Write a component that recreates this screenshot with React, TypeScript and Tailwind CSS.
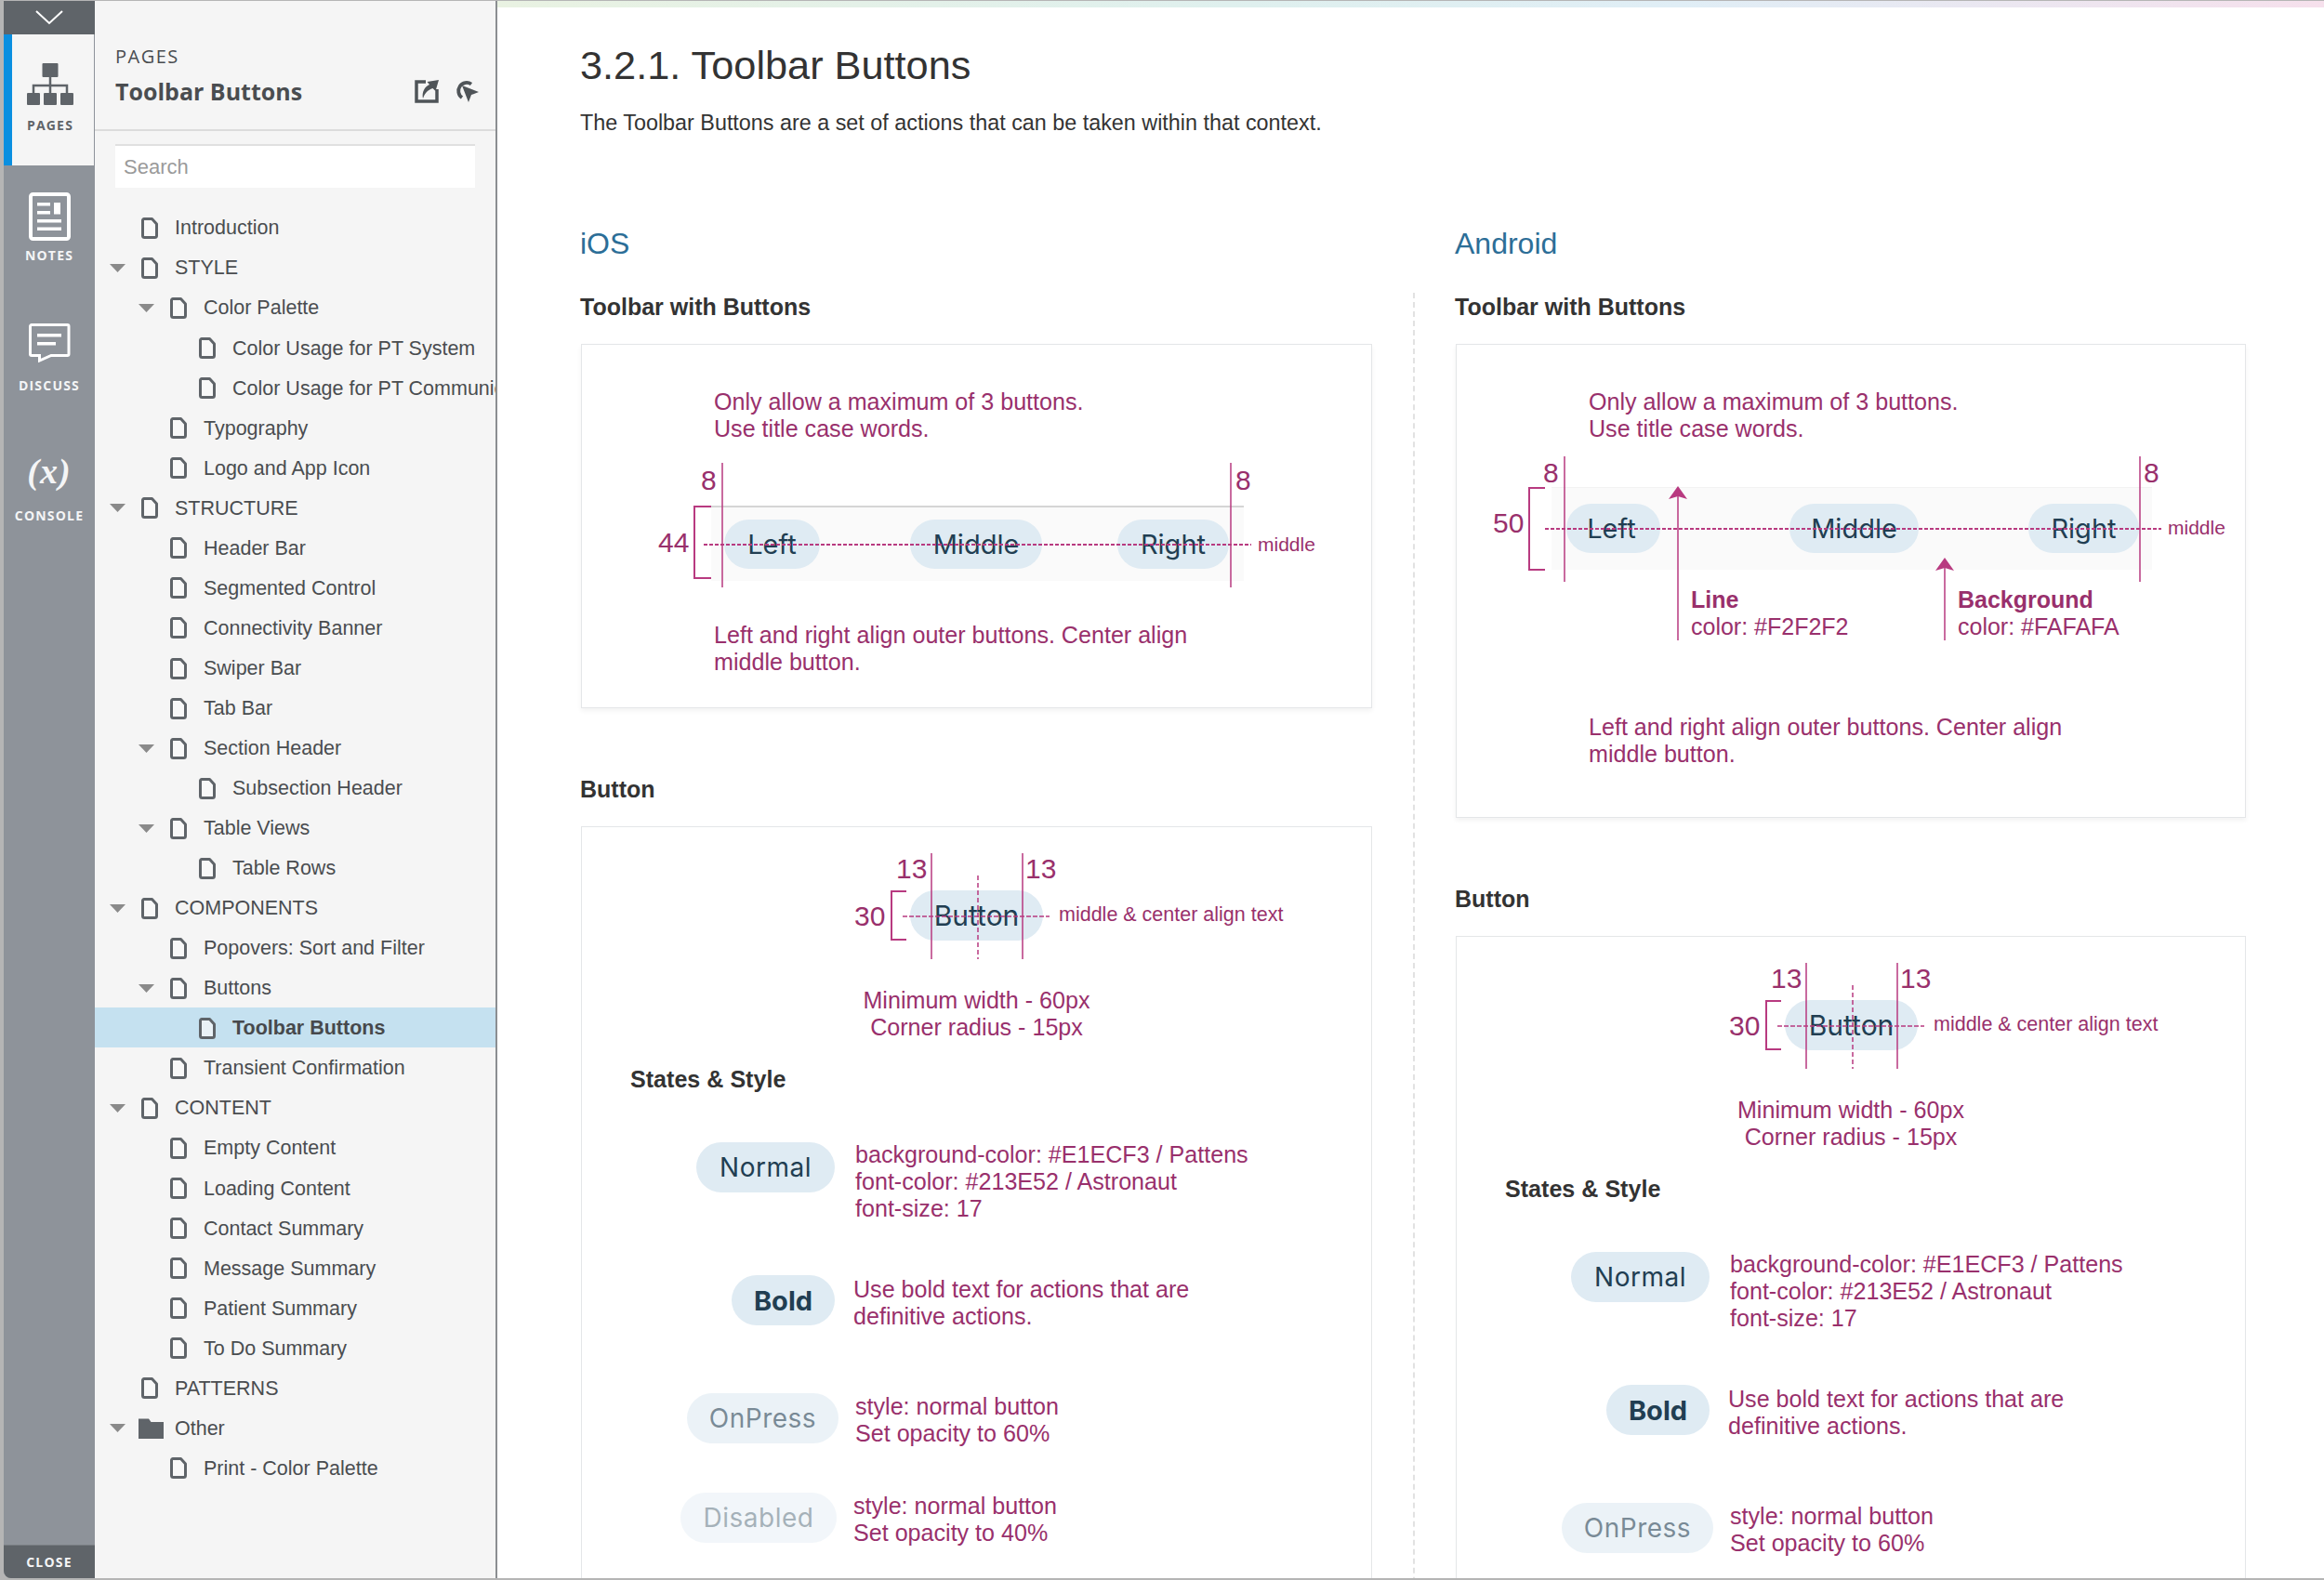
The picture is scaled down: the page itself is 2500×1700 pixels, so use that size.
import React from 'react';

const LINE = '#b83a80';

function DocIcon() {
  return (
    <svg width="18" height="23" viewBox="0 0 18 23" className="shrink-0">
      <path d="M3 1.5H11.5L16.5 7V19.5a2 2 0 0 1-2 2H3.5a2 2 0 0 1-2-2V3A1.5 1.5 0 0 1 3 1.5Z" fill="#fafafa" fillOpacity="0.7" stroke="#5f6469" strokeWidth="3" strokeLinejoin="round" />
    </svg>
  );
}

function FolderIcon() {
  return (
    <svg width="27" height="22" viewBox="0 0 27 22" className="shrink-0 -ml-[3px] -mr-[6px]">
      <path d="M0 0.5H11L13.5 4H27V22H0Z" fill="#5f6469" />
    </svg>
  );
}

function Caret() {
  return (
    <svg width="17" height="9" viewBox="0 0 17 9">
      <path d="M0 0H17L8.5 9Z" fill="#8a8a8a" />
    </svg>
  );
}

type Row = { t: string; d: number; c?: boolean; sel?: boolean; folder?: boolean };
const rows: Row[] = [
  { t: 'Introduction', d: 0 },
  { t: 'STYLE', d: 0, c: true },
  { t: 'Color Palette', d: 1, c: true },
  { t: 'Color Usage for PT System', d: 2 },
  { t: 'Color Usage for PT Communication', d: 2 },
  { t: 'Typography', d: 1 },
  { t: 'Logo and App Icon', d: 1 },
  { t: 'STRUCTURE', d: 0, c: true },
  { t: 'Header Bar', d: 1 },
  { t: 'Segmented Control', d: 1 },
  { t: 'Connectivity Banner', d: 1 },
  { t: 'Swiper Bar', d: 1 },
  { t: 'Tab Bar', d: 1 },
  { t: 'Section Header', d: 1, c: true },
  { t: 'Subsection Header', d: 2 },
  { t: 'Table Views', d: 1, c: true },
  { t: 'Table Rows', d: 2 },
  { t: 'COMPONENTS', d: 0, c: true },
  { t: 'Popovers: Sort and Filter', d: 1 },
  { t: 'Buttons', d: 1, c: true },
  { t: 'Toolbar Buttons', d: 2, sel: true },
  { t: 'Transient Confirmation', d: 1 },
  { t: 'CONTENT', d: 0, c: true },
  { t: 'Empty Content', d: 1 },
  { t: 'Loading Content', d: 1 },
  { t: 'Contact Summary', d: 1 },
  { t: 'Message Summary', d: 1 },
  { t: 'Patient Summary', d: 1 },
  { t: 'To Do Summary', d: 1 },
  { t: 'PATTERNS', d: 0 },
  { t: 'Other', d: 0, c: true, folder: true },
  { t: 'Print - Color Palette', d: 1 },
];
const indent = ['pl-[16px]', 'pl-[47px]', 'pl-[78px]'];

function TreeRow({ r }: { r: Row }) {
  return (
    <div className={`flex h-[43.05px] items-center whitespace-nowrap pt-[2px] ${indent[r.d]} ${r.sel ? 'bg-[#c5e1f0] font-bold text-[#47494c]' : ''}`}>
      <div className="flex w-[34px] shrink-0 items-center">{r.c ? <Caret /> : null}</div>
      {r.folder ? <FolderIcon /> : <DocIcon />}
      <span className="ml-[18px]">{r.t}</span>
    </div>
  );
}

function RailLabel({ children, dark }: { children: React.ReactNode; dark?: boolean }) {
  return (
    <div className={`font-['Open_Sans',sans-serif] text-[14px] font-bold leading-none tracking-[1.2px] ${dark ? 'text-[#5f6469]' : 'text-[#f4f5f6]'}`}>
      {children}
    </div>
  );
}

function Rail() {
  return (
    <div className="flex w-[98px] shrink-0 flex-col bg-[#8e939a]">
      <div className="flex h-[36px] items-center justify-center bg-[#5f6469]">
        <svg width="32" height="18" viewBox="0 0 32 18">
          <path d="M2 2L16 15L30 2" fill="none" stroke="#fff" strokeWidth="2" />
        </svg>
      </div>
      <div className="flex h-[141px] w-[97px] flex-col items-center border-l-[9px] border-[#0a8fe0] bg-[#f5f5f5] pt-[31px]">
        <svg width="50" height="45" viewBox="0 0 50 45" className="-ml-[6px]">
          <rect x="16.5" y="0" width="17" height="15" rx="1" fill="#5f6469" />
          <path d="M25 15V24M7 32V24H43V32M25 24V32" fill="none" stroke="#5f6469" strokeWidth="2.5" />
          <rect x="0" y="32" width="14" height="13" rx="1" fill="#5f6469" />
          <rect x="18" y="32" width="14" height="13" rx="1" fill="#5f6469" />
          <rect x="36" y="32" width="14" height="13" rx="1" fill="#5f6469" />
        </svg>
        <div className="mt-[15px] -ml-[6px]"><RailLabel dark>PAGES</RailLabel></div>
      </div>
      <div className="flex flex-col items-center pt-[29px]">
        <svg width="45" height="52" viewBox="0 0 45 52">
          <rect x="2" y="2" width="41" height="48" rx="2.5" fill="#8e939a" stroke="#fff" strokeWidth="4" />
          <rect x="9" y="11" width="14" height="3.5" fill="#fff" />
          <rect x="9" y="20" width="14" height="3.5" fill="#fff" />
          <rect x="27" y="11" width="7" height="12.5" fill="#fff" />
          <rect x="9" y="29" width="26" height="3.5" fill="#fff" />
          <rect x="9" y="37.5" width="26" height="3.5" fill="#fff" />
        </svg>
        <div className="mt-[9px]"><RailLabel>NOTES</RailLabel></div>
      </div>
      <div className="flex flex-col items-center pt-[66px]">
        <svg width="45" height="42" viewBox="0 0 45 42">
          <path d="M3 1.5H41.5a1.5 1.5 0 0 1 1.5 1.5V33a1.5 1.5 0 0 1-1.5 1.5H24L11.5 40V34.5H3A1.5 1.5 0 0 1 1.5 33V3A1.5 1.5 0 0 1 3 1.5Z" fill="#8e939a" stroke="#fff" strokeWidth="3" />
          <rect x="9" y="11" width="26" height="3.5" fill="#fff" />
          <rect x="9" y="20" width="20" height="3.5" fill="#fff" />
        </svg>
        <div className="mt-[18px]"><RailLabel>DISCUSS</RailLabel></div>
      </div>
      <div className="flex flex-col items-center pt-[59px]">
        <div className="font-['Liberation_Serif',serif] text-[38px] font-bold italic leading-[52px] tracking-[1px] text-[#f4f5f6]">(x)</div>
        <div className="mt-[15px]"><RailLabel>CONSOLE</RailLabel></div>
      </div>
      <div className="mt-auto flex h-[36px] items-center justify-center border-t border-[#777c81] bg-[#5f6469]">
        <RailLabel>CLOSE</RailLabel>
      </div>
    </div>
  );
}

function Panel() {
  return (
    <div className="flex w-[433px] shrink-0 flex-col overflow-hidden border-r-2 border-[#8b8e91] bg-[#f5f5f5] font-['Liberation_Sans',sans-serif] text-[21.5px] text-[#4a4d50]">
      <div className="flex h-[140px] shrink-0 flex-col border-b-2 border-[#dcdcdc] pl-[22px] pr-[18px] pt-[46px] font-['Open_Sans',sans-serif]">
        <div className="text-[20px] leading-[28px] tracking-[1.5px] text-[#4a4d50]">PAGES</div>
        <div className="mt-[5px] flex items-center justify-between">
          <div className="text-[25px] font-bold leading-[36px] text-[#4a4d50]">Toolbar Buttons</div>
          <div className="flex items-center gap-[17px]">
            <svg width="26" height="25" viewBox="0 0 26 25">
              <path d="M12 2H2V23H24V10" fill="none" stroke="#4f5458" strokeWidth="3.5" />
              <path d="M26 0L22.5 12L19.5 9C14 11 11 14 9 20C7.5 13 11 7 16 5L13.5 2Z" fill="#4f5458" />
            </svg>
            <svg width="26" height="24" viewBox="0 0 26 24">
              <path d="M18 4.5A8.5 8.5 0 1 0 8 19" fill="none" stroke="#4f5458" strokeWidth="3.8" />
              <path d="M8 6L26 13L18 16L15 24Z" fill="#4f5458" />
            </svg>
          </div>
        </div>
      </div>
      <div className="ml-[22px] mr-[22px] mt-[14px] flex h-[47px] shrink-0 items-center border-t-2 border-[#e0e0e0] bg-white pl-[9px] text-[22px] text-[#9a9a9a]">
        Search
      </div>
      <div className="mt-[21px]">
        {rows.map((r) => (
          <TreeRow key={r.t} r={r} />
        ))}
      </div>
    </div>
  );
}

function Pill({ children, className }: { children: React.ReactNode; className: string }) {
  return (
    <div className={`flex items-center justify-center rounded-full bg-[#dfebf3] font-['Inter',sans-serif] text-[#213E52] ${className}`}>
      {children}
    </div>
  );
}

const magenta = 'text-[#99306c]';

function Label({ className, children }: { className: string; children: React.ReactNode }) {
  return <div className={`absolute whitespace-nowrap leading-none ${magenta} ${className}`}>{children}</div>;
}

function IosDiagram() {
  return (
    <div className="relative mt-[14px] h-[150px]">
      <div className="absolute left-[139px] top-[54px] h-[81px] w-[573px] border-t-2 border-[#d5d5d5] bg-[#fafafa]" />
      <Pill className="absolute left-[153px] top-[69px] h-[53px] w-[103px] text-[29px]">Left</Pill>
      <Pill className="absolute left-[353px] top-[69px] h-[53px] w-[142px] text-[29px]">Middle</Pill>
      <Pill className="absolute left-[576px] top-[69px] h-[53px] w-[120px] text-[29px]">Right</Pill>
      <svg className="absolute left-0 top-0 h-full w-full overflow-visible">
        <path d="M151 8V142M698 8V142" stroke={LINE} strokeWidth="1.5" fill="none" />
        <path d="M139 55H121V132H139" stroke={LINE} strokeWidth="2" fill="none" />
        <path d="M131 96H720" stroke={LINE} strokeWidth="2" strokeDasharray="4 2" fill="none" />
      </svg>
      <Label className="left-[128px] top-[12px] text-[30px]">8</Label>
      <Label className="left-[703px] top-[12px] text-[30px]">8</Label>
      <Label className="left-[82px] top-[79px] text-[30px]">44</Label>
      <Label className="left-[727px] top-[85px] text-[21px]">middle</Label>
    </div>
  );
}

function AndroidDiagram() {
  return (
    <div className="relative mt-[5px] h-[215px]">
      <div className="absolute left-[102px] top-[43px] h-[89px] w-[646px] border-t border-[#f2f2f2] bg-[#fafafa]" />
      <Pill className="absolute left-[118px] top-[61px] h-[53px] w-[101px] text-[29px]">
        <span className="-ml-[4px]">Left</span>
      </Pill>
      <Pill className="absolute left-[358px] top-[61px] h-[53px] w-[139px] text-[29px]">Middle</Pill>
      <Pill className="absolute left-[615px] top-[61px] h-[53px] w-[119px] text-[29px]">Right</Pill>
      <svg className="absolute left-0 top-0 h-full w-full overflow-visible">
        <path d="M116 10V145M735 10V145" stroke={LINE} strokeWidth="1.5" fill="none" />
        <path d="M95 44H78V132H95" stroke={LINE} strokeWidth="2" fill="none" />
        <path d="M95 88H758" stroke={LINE} strokeWidth="2" strokeDasharray="4 2" fill="none" />
        <path d="M238 52V208M525 129V208" stroke={LINE} strokeWidth="1.5" fill="none" />
        <path d="M238 42L248 56L238 53L228 56Z M525 119L535 133L525 130L515 133Z" fill={LINE} />
      </svg>
      <Label className="left-[93px] top-[13px] text-[30px]">8</Label>
      <Label className="left-[739px] top-[13px] text-[30px]">8</Label>
      <Label className="left-[39px] top-[67px] text-[30px]">50</Label>
      <Label className="left-[765px] top-[76px] text-[21px]">middle</Label>
      <Label className="left-[252px] top-[152px] text-[25px] font-bold">Line</Label>
      <Label className="left-[252px] top-[181px] text-[25px]">color: #F2F2F2</Label>
      <Label className="left-[539px] top-[152px] text-[25px] font-bold">Background</Label>
      <Label className="left-[539px] top-[181px] text-[25px]">color: #FAFAFA</Label>
    </div>
  );
}

function ButtonDiagram() {
  return (
    <div className="relative h-[114px]">
      <Pill className="absolute left-[353px] top-[40px] h-[54px] w-[143px] text-[30px]">Button</Pill>
      <svg className="absolute left-0 top-0 h-full w-full overflow-visible">
        <path d="M376 0V114M474 0V114" stroke={LINE} strokeWidth="1.5" fill="none" />
        <path d="M426 24V114" stroke={LINE} strokeWidth="1.5" strokeDasharray="5 3" fill="none" />
        <path d="M349 41H333V93H349" stroke={LINE} strokeWidth="2" fill="none" />
        <path d="M345 68H503" stroke={LINE} strokeWidth="1.5" strokeDasharray="5 2" fill="none" />
      </svg>
      <Label className="left-[338px] top-[2px] text-[30px]">13</Label>
      <Label className="left-[477px] top-[2px] text-[30px]">13</Label>
      <Label className="left-[293px] top-[53px] text-[30px]">30</Label>
      <Label className="left-[513px] top-[56px] text-[21.5px]">middle &amp; center align text</Label>
    </div>
  );
}

function StateRow({ pill, lines, className, pillClass, textClass }: { pill: React.ReactNode; lines: string[]; className: string; pillClass: string; textClass: string }) {
  return (
    <div className={`flex items-start ${className}`}>
      <div className="flex w-[276px] shrink-0 justify-end">
        <Pill className={`h-[54px] text-[28px] ${pillClass}`}>{pill}</Pill>
      </div>
      <div className={`${magenta} ${textClass}`}>
        {lines.map((l) => (
          <div key={l}>{l}</div>
        ))}
      </div>
    </div>
  );
}

function ButtonBox() {
  return (
    <>
      <h3 className="mt-[73px] text-[25px] font-bold leading-[29px] text-[#333]">Button</h3>
      <div className="ml-px mt-[25px] border border-[#e4e6e8] pb-[40px] pt-[28px] text-[25.1px] leading-[29px]">
        <ButtonDiagram />
        <div className={`mt-[30px] text-center ${magenta}`}>
          <div>Minimum width - 60px</div>
          <div>Corner radius - 15px</div>
        </div>
        <div className="mt-[27px] pl-[52px] font-bold text-[#333]">States &amp; Style</div>
        <StateRow className="mt-[52px]" pill="Normal" pillClass="mr-[4px] mt-[1px] w-[149px] tracking-[0.5px]" textClass="ml-[18px]" lines={['background-color: #E1ECF3 / Pattens', 'font-color: #213E52 / Astronaut', 'font-size: 17']} />
        <StateRow className="mt-[58px]" pill={<span className="text-[29px] font-bold">Bold</span>} pillClass="-mt-[1px] mr-[4px] w-[111px]" textClass="ml-[16px]" lines={['Use bold text for actions that are', 'definitive actions.']} />
        <StateRow className="mt-[68px]" pill="OnPress" pillClass="w-[163px] opacity-60 tracking-[0.5px]" textClass="ml-[18px]" lines={['style: normal button', 'Set opacity to 60%']} />
        <StateRow className="mt-[49px]" pill="Disabled" pillClass="mr-[2px] w-[168px] opacity-40 tracking-[0.5px]" textClass="ml-[16px]" lines={['style: normal button', 'Set opacity to 40%']} />
      </div>
    </>
  );
}

function ToolbarBox({ android }: { android?: boolean }) {
  return (
    <div className="ml-px mt-[25px] border border-[#e4e6e8] pl-[142px] pt-[47px] text-[25.1px] leading-[29px] shadow-[0_3px_5px_rgba(0,0,0,0.05)]">
      <div className={magenta}>
        <div>Only allow a maximum of 3 buttons.</div>
        <div>Use title case words.</div>
      </div>
      <div className="-ml-[142px] text-[25px]">{android ? <AndroidDiagram /> : <IosDiagram />}</div>
      <div className={`${android ? 'mt-[72px] pb-[53px]' : 'mt-[29px] pb-[34px]'} ${magenta}`}>
        <div>Left and right align outer buttons. Center align</div>
        <div>middle button.</div>
      </div>
    </div>
  );
}

function Column({ title, android, className }: { title: string; android?: boolean; className: string }) {
  return (
    <div className={`shrink-0 ${className}`}>
      <h2 className="text-[32px] leading-[38px] text-[#2c6e97]">{title}</h2>
      <h3 className="mt-[35px] text-[25px] font-bold leading-[29px] text-[#333]">Toolbar with Buttons</h3>
      <ToolbarBox android={android} />
      <ButtonBox />
    </div>
  );
}

function Main() {
  return (
    <div className="min-w-0 flex-1 overflow-hidden bg-white font-['Liberation_Sans',sans-serif]">
      <div className="h-[7px] bg-[linear-gradient(to_right,#e9f2e2,#dff0ee_40%,#e0eef6_65%,#f6e0ec)]" />
      <div className="pl-[89px]">
        <h1 className="mt-[36px] text-[43.3px] leading-[52px] text-[#333]">3.2.1. Toolbar Buttons</h1>
        <p className="mt-[21px] text-[23.35px] leading-[30px] text-[#333]">The Toolbar Buttons are a set of actions that can be taken within that context.</p>
        <div className="mt-[96px] flex">
          <Column title="iOS" className="w-[852px]" />
          <div className="ml-[44px] mr-[43px] mt-[72px] w-0 shrink-0 border-l-2 border-dashed border-[#e2e2e2]" />
          <Column title="Android" android className="w-[851px]" />
        </div>
      </div>
    </div>
  );
}

export default function App() {
  return (
    <div className="h-[1700px] w-[2500px] overflow-hidden bg-[#b5b5b5] pb-[2px] pl-[4px] pt-px">
      <div className="flex h-full overflow-hidden rounded-bl-[8px]">
        <Rail />
        <Panel />
        <Main />
      </div>
    </div>
  );
}
